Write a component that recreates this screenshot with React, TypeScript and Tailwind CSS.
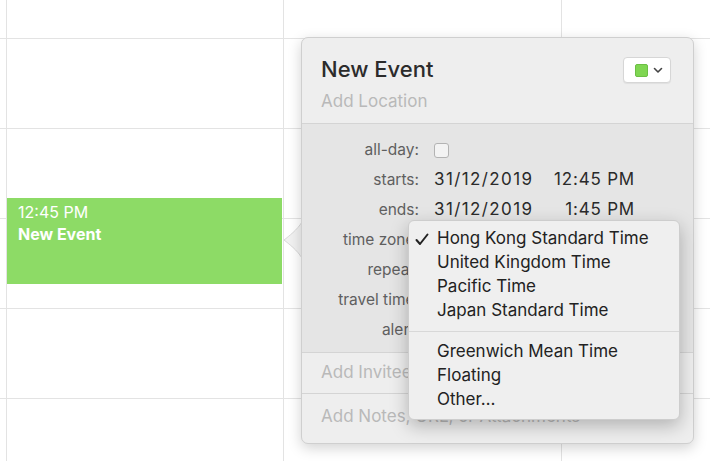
import React from "react";

const font = { fontFamily: 'Inter, "Liberation Sans", Arial, sans-serif' };

const rows = [38, 90, 90, 90, 90, 63];

function CalendarGrid() {
  return (
    <div className="grid h-full w-full grid-cols-[6px_277px_278px_1fr] grid-rows-[38px_90px_90px_90px_90px_1fr]">
      {rows.map((_, r) =>
        [0, 1, 2, 3].map((c) => (
          <div
            key={`${r}-${c}`}
            className={`${c > 0 ? "border-l" : ""} ${r > 0 ? "border-t" : ""} border-[#e3e3e3]`}
          />
        ))
      )}
    </div>
  );
}

const menuItems = [
  { label: "Hong Kong Standard Time", checked: true },
  { label: "United Kingdom Time" },
  { label: "Pacific Time" },
  { label: "Japan Standard Time" },
];
const menuItems2 = ["Greenwich Mean Time", "Floating", "Other…"];

function Row({ label, children }: { label: string; children?: React.ReactNode }) {
  return (
    <div className="flex h-[30px] items-center">
      <div className="w-[117px] text-right text-[15.5px] text-[#5f5f5f]">{label}</div>
      <div className="ml-[15px] flex items-center text-[17px] text-[#2a2a2a]">{children}</div>
    </div>
  );
}

export default function App() {
  return (
    <div className="relative h-[461px] w-[710px] overflow-hidden bg-white" style={font}>
      <CalendarGrid />

      {/* event block */}
      <div className="absolute left-[7px] top-[198px] h-[86px] w-[275px] bg-[#8ddb66] pl-[11px] pt-[6px] text-white">
        <div className="text-[16px] leading-[17px]">12:45 PM</div>
        <div className="mt-[5px] text-[16px] font-bold leading-[17px]">New Event</div>
      </div>

      {/* popover arrow */}
      <svg className="absolute left-[283px] top-[222px]" width="20" height="36" viewBox="0 0 20 36">
        <path d="M19 0 C14 8 6 14 1 18 C6 22 14 28 19 36 Z" fill="#f1f1f1" stroke="#d0d0d0" strokeWidth="0.8" />
      </svg>

      {/* popover */}
      <div className="absolute left-[301px] top-[37px] flex h-[407px] w-[393px] flex-col overflow-hidden rounded-[7px] border border-[#cfcfcf] bg-[#eeeeee] shadow-[0_4px_14px_rgba(0,0,0,0.18)]">
        <div className="relative h-[85px] shrink-0 px-[19px] pt-[18px]">
          <div className="text-[22px] font-medium leading-[27px] text-[#2b2b2b]">New Event</div>
          <div className="mt-[8px] text-[17px] leading-[20px] text-[#b9b9b9]">Add Location</div>
          <div className="absolute right-[22px] top-[19px] flex h-[26px] w-[48px] items-center gap-[5px] rounded-[4px] border border-[#d6d6d6] bg-white pl-[11px] shadow-[0_1px_1px_rgba(0,0,0,0.06)]">
            <div className="h-[13px] w-[13px] rounded-[2px] border border-[#6cbf45] bg-[#7fd652]" />
            <svg width="10" height="7" viewBox="0 0 10 7">
              <path d="M1.5 1.5 L5 5 L8.5 1.5" fill="none" stroke="#444" strokeWidth="1.6" strokeLinecap="round" strokeLinejoin="round" />
            </svg>
          </div>
        </div>
        <div className="h-[230px] shrink-0 border-t border-b border-[#d4d4d4] bg-[#e5e5e5] pb-[9px] pt-[11px]">
          <Row label="all-day:">
            <div className="h-[15px] w-[15px] rounded-[3px] border border-[#b3b3b3] bg-[#f3f3f3]" />
          </Row>
          <Row label="starts:">
            <span className="w-[112px] tracking-[1.4px]">31/12/2019</span>
            <span className="w-[89px] text-right tracking-[0.8px]">12:45 PM</span>
          </Row>
          <Row label="ends:">
            <span className="w-[112px] tracking-[1.4px]">31/12/2019</span>
            <span className="w-[89px] text-right tracking-[0.8px]">1:45 PM</span>
          </Row>
          <Row label="time zone:" />
          <Row label="repeat:" />
          <Row label="travel time:" />
          <Row label="alert:" />
        </div>
        <div className="flex h-[41px] shrink-0 items-center border-b border-[#d4d4d4] px-[19px] text-[17px] text-[#b9b9b9]">
          Add Invitees
        </div>
        <div className="flex flex-1 items-center px-[19px] pb-[4px] text-[17px] text-[#b9b9b9]">
          Add Notes, URL, or Attachments
        </div>
      </div>

      {/* time zone menu */}
      <div className="absolute left-[408px] top-[220px] w-[272px] rounded-[6px] border border-[#cdcdcd] bg-[#efefef] pb-[7px] pt-[6px] shadow-[0_6px_18px_rgba(0,0,0,0.25)]">
        {menuItems.map((m) => (
          <div key={m.label} className="flex h-[24px] items-center text-[17px] text-[#222]">
            <span className="flex w-[28px] items-center pl-[6px]">
              {m.checked && (
                <svg width="14" height="13" viewBox="0 0 14 13">
                  <path d="M1.5 7 L5 11 L12.5 1.5" fill="none" stroke="#222" strokeWidth="2" strokeLinecap="round" strokeLinejoin="round" />
                </svg>
              )}
            </span>
            <span>{m.label}</span>
          </div>
        ))}
        <div className="my-[8px] h-px bg-[#d8d8d8]" />
        {menuItems2.map((m) => (
          <div key={m} className="flex h-[24px] items-center text-[17px] text-[#222]">
            <span className="w-[28px]" />
            <span>{m}</span>
          </div>
        ))}
      </div>
    </div>
  );
}
